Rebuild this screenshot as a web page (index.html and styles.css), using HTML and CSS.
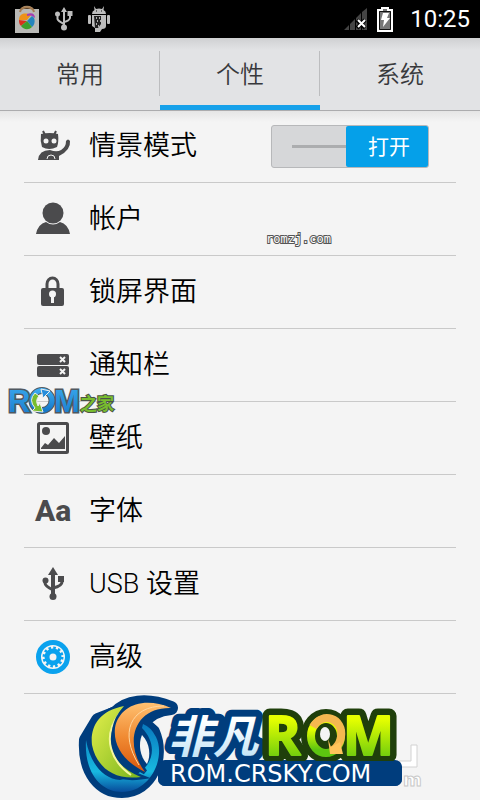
FILE: index.html
```html
<!DOCTYPE html>
<html lang="zh-CN">
<head>
  <meta charset="UTF-8" />
  <meta name="viewport" content="width=device-width, initial-scale=1" />
  <title>设置</title>
  <link rel="stylesheet" href="styles.css">
</head>
<body>
  <header class="status-bar">
    <div class="status-icons">
      <svg class="shop-icon" width="26" height="28" viewBox="0 0 26 28">
        <path d="M6 7C7 0 19 0 20 7" fill="none" stroke="#a98d6c" stroke-width="2"/>
        <path d="M1 4H25V28H1Z" fill="#b9b9b6"/>
        <path d="M6 7C7 1 19 1 20 7" fill="none" stroke="#a57b50" stroke-width="2"/>
        <path d="M5 15C5 9 10 7 17 10L13 15Z" fill="#ee9117"/>
        <path d="M13 9C18 7 21 9 21 13C18 10 16 10 13 11Z" fill="#a53db3"/>
        <path d="M18 11C22 13 21 20 18 22L13 16Z" fill="#2585bd"/>
        <path d="M5 15L13 16L7 21C5 19 5 17 5 15Z" fill="#d9301d"/>
        <path d="M13 16L18 22C14 26 9 24 7 21Z" fill="#3b9f2c"/>
      </svg>
      <svg width="18" height="24" viewBox="0 0 18 24" fill="#bdbdbd">
        <path d="M9 0L12 5H10V19H8V5H6Z"/>
        <path d="M2.500 8V12Q3 14 9 17M15 8V11Q14 14 9 15" fill="none" stroke="#bdbdbd" stroke-width="2"/>
        <circle cx="2.500" cy="7" r="2.500"/><path d="M12.500 4H17.500V9H12.500Z"/>
        <circle cx="9" cy="20.500" r="3"/>
      </svg>
      <svg width="22" height="26" viewBox="0 0 22 26" fill="#bdbdbd">
        <path d="M6 0L8 3Q11 2 14 3L16 0L15.500 4Q18 5 18 8H4Q4 5 6.500 4Z"/>
        <path d="M4 9H18V20Q18 23 14 23L12 26H7V22L4 20Z"/>
        <rect y="9" width="3" height="9" rx="1"/><rect x="19" y="9" width="3" height="9" rx="1"/>
        <path d="M6 10H13V18L10 22H7Z" fill="#222"/>
        <path d="M8 12h1M11 12h1M9 15h1M12 15h1M8 18h1M10 20h1" stroke="#ddd" stroke-width="1.500"/>
        <path d="M8 5h1M13 5h1" stroke="#111"/>
      </svg>
    </div>
    <div class="status-info">
      <svg width="24" height="23" viewBox="0 0 24 23">
        <path d="M0 22L5 17V22ZM6 16L11 11V22H6ZM12 10L17 5V22H12ZM18 4L23 0V22H18Z" fill="#444"/>
        <path d="M13 12L21 20M21 12L13 20" stroke="#000" stroke-width="4"/>
        <path d="M14 12L21 19M21 12L14 19" stroke="#fff" stroke-width="2"/>
      </svg>
      <svg width="16" height="25" viewBox="0 0 16 25">
        <path d="M1 3H5V1H11V3H15V24H1Z" fill="#777" stroke="#fff" stroke-width="2"/>
        <path d="M2.500 4.500H13.500V22.500H2.500Z" fill="none" stroke="#111"/>
        <path d="M6 6H12L10 11H13L6 20L7 13H4Z" fill="#fff"/>
      </svg>
      <span class="clock">10:25</span>
    </div>
  </header>

  <nav class="tabs">
    <a class="tab" href="#common">常用</a>
    <a class="tab active" href="#personal">个性</a>
    <a class="tab" href="#system">系统</a>
  </nav>

  <main class="settings" id="personal">
    <div class="row">
      <svg class="row-icon" viewBox="0 0 36 36" fill="#4b4b4d">
        <path d="M8 3L10 7M21 3L19 7" stroke="#4b4b4d" stroke-width="2"/>
        <path d="M6 6Q15 4 23 6Q24 14 22 19Q14 23 7 19Q5 13 6 6Z"/>
        <path d="M3 32Q4 22 15 22Q25 26 30 18Q31 16 31 13Q33 10 35 13Q36 22 24 28V32Z"/>
        <circle cx="11" cy="13" r="2.500" fill="#f4f4f4"/><circle cx="19" cy="13" r="2.500" fill="#f4f4f4"/>
        <path d="M12 31A4 4 0 0 1 20 31" fill="none" stroke="#f4f4f4"/>
      </svg>
      <label class="row-label" for="profile">情景模式</label>
      <label class="switch">
        <input type="checkbox" id="profile" checked>
        <span class="track"></span>
        <span class="handle">打开</span>
      </label>
    </div>
    <a class="row" href="#account">
      <svg class="row-icon" viewBox="0 0 36 36" fill="#4b4b4d">
        <circle cx="18" cy="12" r="10.500"/>
        <path d="M1 33Q3 23 11 21Q18 26 25 21Q33 23 35 33Z"/>
      </svg>
      <span class="row-label">帐户</span>
    </a>
    <a class="row" href="#lock">
      <svg class="row-icon" viewBox="0 0 36 36" fill="#4b4b4d">
        <path d="M12 16V10A5.500 6 0 0 1 23 10V16" fill="none" stroke="#4b4b4d" stroke-width="3"/>
        <rect x="6" y="14" width="23" height="18" rx="2"/>
        <circle cx="17.500" cy="20" r="3.500" fill="#f4f4f4"/><path d="M16 21H19V29H16Z" fill="#f4f4f4"/>
      </svg>
      <span class="row-label">锁屏界面</span>
    </a>
    <a class="row" href="#notice">
      <svg class="row-icon" viewBox="0 0 36 36" fill="#4b4b4d">
        <rect x="2" y="7" width="32" height="11" rx="2"/><rect x="2" y="19" width="32" height="11" rx="2"/>
        <path d="M25 10L30 15M30 10L25 15M25 22L30 27M30 22L25 27" stroke="#f4f4f4" stroke-width="2"/>
      </svg>
      <span class="row-label">通知栏</span>
    </a>
    <a class="row" href="#wallpaper">
      <svg class="row-icon" viewBox="0 0 36 36" fill="#4b4b4d">
        <rect x="3.500" y="3.500" width="29" height="29" rx="1" fill="none" stroke="#4b4b4d" stroke-width="3"/>
        <circle cx="11" cy="11" r="4"/>
        <path d="M6 28L10 23L13 25L19 18L24 23L30 16V29H6Z"/>
      </svg>
      <span class="row-label">壁纸</span>
    </a>
    <a class="row" href="#font">
      <span class="row-icon font-icon" aria-hidden="true">Aa</span>
      <span class="row-label">字体</span>
    </a>
    <a class="row" href="#usb">
      <svg class="row-icon" viewBox="0 0 36 36" fill="#4b4b4d">
        <path d="M18 1L23 9H20V28H16V9H13Z"/>
        <path d="M10 15V17Q10 20 18 24M27 14V16Q27 20 18 22" fill="none" stroke="#4b4b4d" stroke-width="3"/>
        <circle cx="10.500" cy="14.500" r="3"/><path d="M23 10H29V16H23Z"/>
        <circle cx="18" cy="30.500" r="3.500"/>
      </svg>
      <span class="row-label">USB 设置</span>
    </a>
    <a class="row" href="#advanced">
      <svg class="row-icon" viewBox="0 0 36 36">
        <circle cx="18" cy="18" r="14.500" fill="none" stroke="#0aa2ee" stroke-width="5"/>
        <circle cx="18" cy="18" r="6" fill="none" stroke="#0aa2ee" stroke-width="5"/>
        <circle cx="18" cy="18" r="9" fill="none" stroke="#0aa2ee" stroke-width="3" stroke-dasharray="2.500 2.212"/>
      </svg>
      <span class="row-label">高级</span>
    </a>
  </main>

  <footer class="footer">
    <svg class="crsky-logo" width="324" height="106" viewBox="78 694 324 106">
      <defs>
        <linearGradient id="lime" x1="0" y1="0" x2="1" y2="1">
          <stop offset="0" stop-color="#e5f04d"/><stop offset="1" stop-color="#79b51c"/>
        </linearGradient>
        <linearGradient id="orange" x1="0" y1="0" x2="0" y2="1">
          <stop offset="0" stop-color="#ffc070"/><stop offset="0.500" stop-color="#f08a32"/><stop offset="1" stop-color="#d8560c"/>
        </linearGradient>
        <linearGradient id="sky" x1="0" y1="0" x2="0" y2="1">
          <stop offset="0" stop-color="#0878bd"/><stop offset="0.700" stop-color="#18b9e0"/><stop offset="1" stop-color="#074b9b"/>
        </linearGradient>
        <linearGradient id="ice" x1="0" y1="0" x2="0" y2="1">
          <stop offset="0.300" stop-color="#fff"/><stop offset="1" stop-color="#b5def5"/>
        </linearGradient>
        <linearGradient id="green" x1="0" y1="0" x2="0" y2="1">
          <stop offset="0.300" stop-color="#e6ff00"/><stop offset="0.900" stop-color="#5cc510"/>
        </linearGradient>
      </defs>

      <!-- faded mark behind the logo -->
      <path d="M411 745H417V767H399V761H411Z" fill="#fff" stroke="#d2d2d2"/>
      <text class="faded" x="403" y="786">m</text>

      <!-- swirl -->
      <path d="M86 740C84 773 101 791 122 791C151 791 164 757 153 732L143 723Q151 710 171 708C146 698 126 702 116 713L98 720Z" fill="#003d7d" stroke="#003d7d" stroke-width="14" stroke-linejoin="round"/>
      <path d="M86 740C84 773 101 792 122 792C151 792 166 757 156 737Q151 727 143 724L142 728C160 746 154 774 120 780C103 779 90 763 86 740Z" fill="url(#sky)"/>
      <path d="M124 706C98 711 90 728 92 745C96 765 112 781 141 777C110 765 98 736 124 706Z" fill="url(#lime)" stroke="#003d7d" stroke-width="5" paint-order="stroke"/>
      <path d="M119 714C101 738 112 762 131 775" fill="none" stroke="#f4f6a0" stroke-width="2"/>
      <path d="M171 708C143 696 119 706 115 728C113 747 125 762 145 772C123 743 134 707 171 708Z" fill="url(#orange)" stroke="#003d7d" stroke-width="5" paint-order="stroke"/>
      <path d="M164 706C130 706 119 733 139 765" fill="none" stroke="#ffd7a0" stroke-width="1"/>
      <path d="M142 735C150 743 151 756 147 764C140 757 138 744 142 735Z" fill="#f4f4f4"/>

      <text class="chinese outline" x="168" y="753">非凡</text>
      <rect x="158" y="760" width="244" height="26" rx="7" fill="#003d7d"/>

      <g class="green-outline">
        <text class="rom-text" x="265" y="755">R</text>
        <text class="rom-text" x="343" y="755">M</text>
        <ellipse cx="326" cy="736" rx="15" ry="17" fill="none"/>
      </g>
      <g class="green-letters">
        <text class="rom-text" x="265" y="755">R</text>
        <text class="rom-text" x="343" y="755">M</text>
      </g>
      <ellipse cx="326" cy="736" rx="15" ry="17" fill="#1f3f0b" stroke="url(#green)" stroke-width="8"/>
      <path d="M313 727C322 711 344 718 341 737Q340 745 333 750" fill="none" stroke="#f4b850" stroke-width="8"/>
      <path d="M328 739L331 747L340 742L343 754L330 754Z" fill="#ffc45b"/>
      <ellipse cx="325" cy="734" rx="5" ry="7" fill="#f4f4f4"/>

      <rect x="158" y="761" width="244" height="25" rx="7" fill="#003d7d"/>
      <text class="crsky-url" x="170" y="782">ROM.CRSKY.COM</text>
    </svg>
  </footer>

  <span class="romzj-mark">romzj.com</span>

  <svg class="rom-mark" width="112" height="40" viewBox="-2 -4 112 40">
    <defs>
      <linearGradient id="blue" x1="0" y1="0" x2="0" y2="1">
        <stop offset="0" stop-color="#3aa9ee"/><stop offset="1" stop-color="#1679ca"/>
      </linearGradient>
    </defs>
    <text class="rom-small" x="1" y="27">R</text>
    <text class="rom-small" x="47" y="27">M</text>
    <circle cx="35" cy="15.500" r="10" fill="none" stroke="#505860" stroke-width="7"/>
    <circle cx="35" cy="15.500" r="10" fill="none" stroke="url(#blue)" stroke-width="5"/>
    <path d="M28 8Q21 15 28 23L25 26L36 27L33 18L31 21Q28 15 32 11Z" fill="#78bd2e" stroke="#eee"/>
    <path d="M34 4L43 6L36 13Z" fill="#268ddb" stroke="#eee"/>
    <text class="rom-home" x="73" y="25">之家</text>
  </svg>
</body>
</html>
```
FILE: styles.css
```css
* {
  box-sizing: border-box;
}
body {
  margin: 0;
  position: relative;
  background: #f4f4f4;
  color: #000;
  font-family: Roboto, "Noto Sans CJK SC", sans-serif;
}
a {
  color: inherit;
  text-decoration: none;
}
.status-bar {
  display: flex;
  justify-content: space-between;
  align-items: center;
  height: 38px;
  padding: 0 10px 0 14px;
  background: #000;
}
.status-icons {
  display: flex;
  align-items: center;
  gap: 15px;
}
.status-info {
  display: flex;
  align-items: center;
  gap: 9px;
}
.clock {
  margin-left: 8px;
  color: #fff;
  font-size: 24px;
  line-height: 38px;
}
.tabs {
  display: flex;
  height: 73px;
  background: linear-gradient(#cfd0d2, #e2e3e5 12px);
  border-bottom: 1px solid #acacae;
  position: relative;
}
.tab {
  position: relative;
  flex: 1;
  color: #38393c;
  font-size: 24px;
  font-weight: 350;
  line-height: 74px;
  text-align: center;
}
.tab.active {
  border-bottom: 5px solid #16a1ea;
}
/* short separators on both sides of the middle tab */
.tab.active::before,
.tab.active::after {
  content: "";
  position: absolute;
  top: 13px;
  left: -1px;
  width: 1px;
  height: 45px;
  background: #bcbdbf;
}
.tab.active::after {
  left: auto;
  right: 0;
}
.settings {
  padding: 0 24px;
  margin-top: -1px;
  background: linear-gradient(#e4e4e4, #f4f4f4 12px);
}
.row {
  display: flex;
  align-items: center;
  height: 73px;
  padding: 0 27px 0 11px;
  border-bottom: 1px solid #c9c9c9;
}
.row-icon {
  flex: none;
  width: 36px;
  height: 36px;
}
.font-icon {
  color: #4b4b4d;
  font-size: 30px;
  font-weight: 800;
  line-height: 36px;
}
.row-label {
  flex: 1;
  margin-left: 18px;
  font-size: 27px;
  font-weight: 350;
  line-height: 38px;
}
.switch {
  position: relative;
  display: flex;
  width: 158px;
  height: 43px;
  background: #d6d7d9;
  border: 1px solid #b7b8ba;
  border-radius: 3px;
}
.switch input {
  position: absolute;
  inset: 0;
  margin: 0;
  opacity: 0;
}
.track {
  flex: 1;
  align-self: center;
  height: 3px;
  margin-left: 20px;
  background: #acadaf;
}
.handle {
  width: 82px;
  background: #05a0e9;
  border-radius: 2px;
  color: #fff;
  font-size: 21px;
  line-height: 43px;
  text-align: center;
  padding-left: 4px;
}
.footer {
  display: flex;
  justify-content: center;
}
.crsky-logo {
  overflow: visible;
}
.faded {
  fill: #fff;
  stroke: #c8c8c8;
  stroke-width: 1px;
  font: bold 18px "DejaVu Sans", sans-serif;
}
.chinese {
  font: italic 700 45px "Noto Sans CJK SC", sans-serif;
  fill: url(#ice);
}
.outline {
  stroke: #003d7d;
  stroke-width: 14px;
  stroke-linejoin: round;
  paint-order: stroke;
}
.rom-text {
  font: bold 54px "Open Sans", sans-serif;
}
.green-outline {
  fill: #1f3f0b;
  stroke: #1f3f0b;
  stroke-width: 15px;
  stroke-linejoin: round;
}
.green-outline ellipse {
  stroke-width: 20px;
}
.green-letters {
  fill: url(#green);
  stroke: url(#green);
  stroke-width: 2px;
  stroke-linejoin: round;
}
.crsky-url {
  font: 24px "DejaVu Sans", sans-serif;
  fill: #fff;
}
.romzj-mark {
  position: absolute;
  top: 231px;
  left: 266px;
  color: #fff;
  font: 12px/16px "DejaVu Sans Mono", monospace;
  -webkit-text-stroke: 2px #555;
  paint-order: stroke;
}
.rom-mark {
  position: absolute;
  top: 381px;
  left: 5px;
}
.rom-small {
  font: bold 31px "Liberation Sans", sans-serif;
  fill: url(#blue);
  stroke: #505860;
  stroke-width: 3px;
  paint-order: stroke;
}
.rom-home {
  font: 700 17px "Noto Sans CJK SC", sans-serif;
  fill: #78bd2e;
  stroke: #4b5348;
  stroke-width: 2px;
  paint-order: stroke;
}
```
